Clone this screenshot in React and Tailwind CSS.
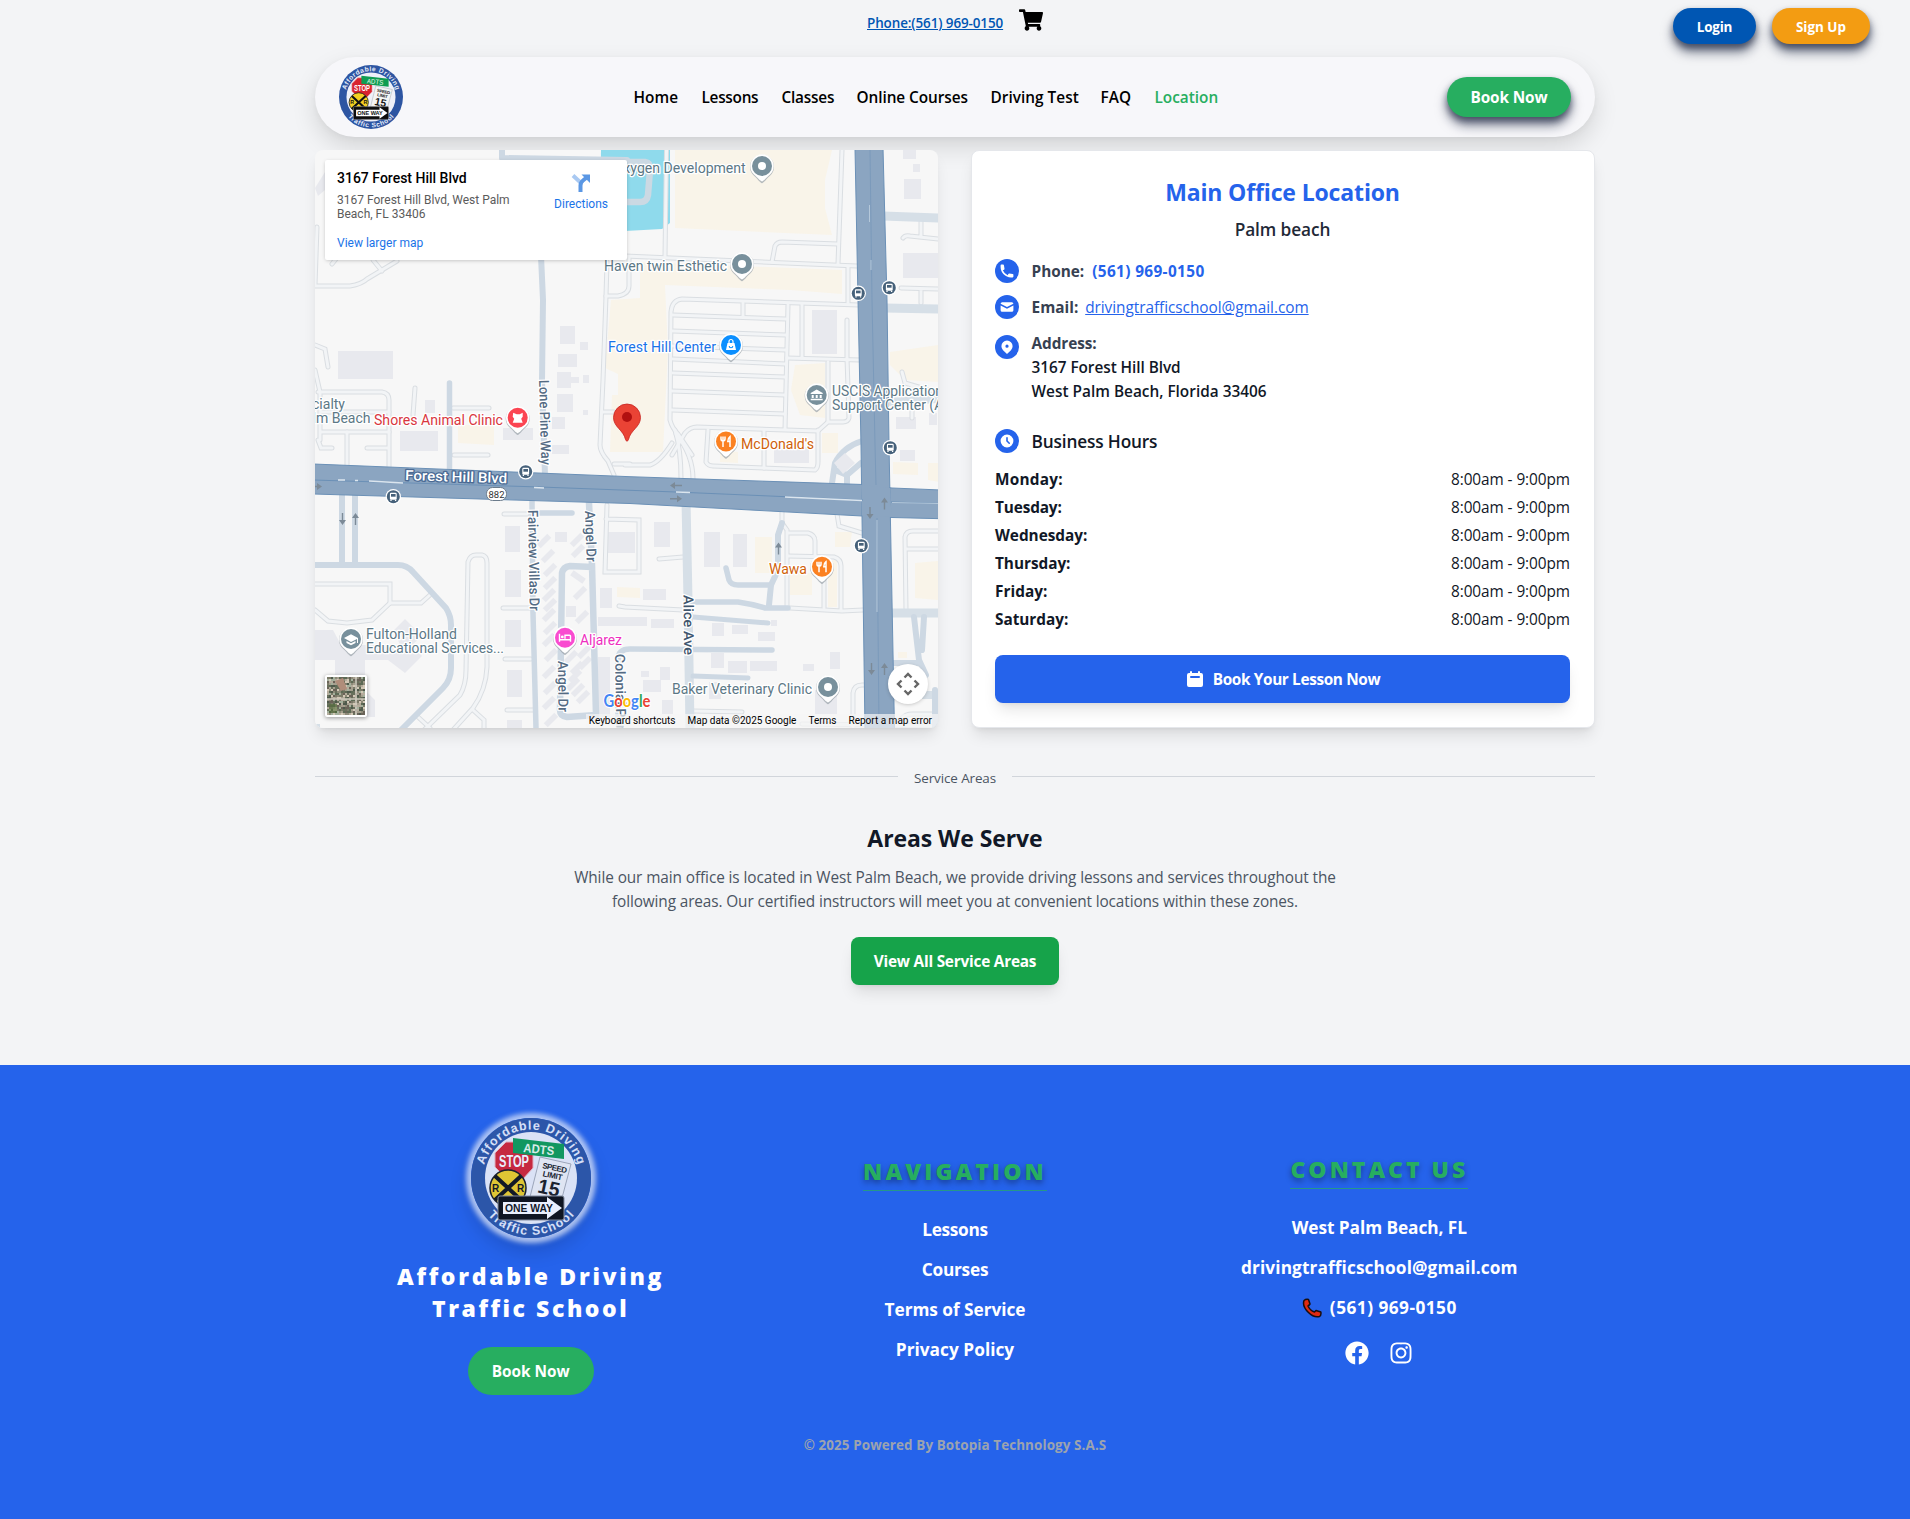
import { useId } from "react";
import { FaShoppingCart, FaFacebook, FaInstagram } from "react-icons/fa";

const BLD = [
  [338,351,55,28],[425,400,10,13],[400,431,38,20],[503,428,30,12],[560,326,15,18],[580,342,8,8],[558,354,19,13],[557,372,14,16],[571,377,8,6],
  [557,394,16,18],[583,410,5,5],[552,417,13,12],[583,375,6,8],[552,445,17,9],[505,526,15,26],[505,570,16,27],[505,620,16,27],[507,670,15,27],
  [507,720,15,8],[555,532,12,10],[606,532,29,21],[600,588,12,20],[598,617,49,9],[598,657,12,60],[654,522,16,25],[704,532,16,35],[733,534,14,33],
  [643,589,23,11],[651,619,23,9],[712,623,12,13],[732,625,16,9],[758,632,17,9],[771,620,6,6],[711,653,13,15],[728,661,19,12],[750,661,27,10],
  [803,664,11,7],[830,652,10,17],[660,667,10,13],[641,671,8,6],[643,680,18,12],[662,700,11,14],[815,690,22,24],[709,682,12,17],[774,447,35,16],
  [900,450,15,11],[903,150,13,9],[913,164,7,8],[904,179,17,20],[903,253,36,25],[812,310,25,44],[896,417,20,12],[929,413,8,12],[566,606,10,11],
];
const VILLAS = [
  [548,556],[550,570],[550,583],[549,595],[550,605],[549,615],[550,628],[549,640],[551,655],[549,672],[550,688],[549,703],[551,720],
  [577,540],[578,551],[580,593],[582,617],[584,652],[585,663],[577,668],[573,684],[578,690],[583,697],[571,657],[575,676],[544,541],
];
const BEIGE = [
  "675,150 832,150 825,180 825,208 832,235 675,228",
  "640,262 842,270 842,294 790,290 665,285 668,350 663,452 610,452 612,395 618,395 618,374 605,368 604,350 607,345 611,300 640,298",
  "890,365 890,352 938,345 938,382 905,380","795,365 825,363 825,418 800,415 791,390","822,433 838,433 838,453 822,453",
  "458,425 494,425 494,445 458,443","755,537 772,537 772,573 755,573","790,573 812,573 812,595 790,595","828,560 837,560 837,607 828,607",
  "835,532 852,532 850,547 835,547","915,563 939,561 939,600 915,598","893,462 918,463 918,475 893,474","898,652 907,652 907,658 898,658",
  "928,463 939,463 939,482 928,480","617,587 640,588 640,598 617,597","720,450 738,452 738,463 720,462",
];
const BLUE_ROADS = [
  ["M541 256L543 300L542 380L545 476",6],["M449.500 383V470",5.5],["M342 495V563M355 495V563",6],
  ["M315 565H398Q407 565 413 572L446 608Q451 616 451 625V668Q451 680 443 688L401 730",6],["M532 500L533 613L536 728",5.5],["M540 513H572",5.5],
  ["M589 503L592 565L596 715L567 717Q560 716 560 710L562 573Q563 567 570 566L592 567",6.5],["M618 728V660Q618 649 630 649L772 650",5.500],
  ["M693 617L768 623",5],["M693 602L738 602Q752 604 765 608L788 608",5.5],["M726 568L729 580Q731 585 738 585L771 585",5.5],
  ["M782 523L778 535V570L771 585L769 605",6],["M693 676L748 678",5],["M502 150V158L627 160",6],
  ["M832 483L835 463Q843 447 862 441M847 483V475L861 463M835 470L847 475",6],["M914 617L919 660L926 675M924 617L922 650M892 663H918",6],["M935 690V728",6],
];
const WIDE_ROADS = [["M686 500L688 600L690 728",9],["M883 216L939 218",9],["M885 308L939 309",9],["M890 613H939",9],["M887 402L939 399",8],["M920 695H939",8],["M315 728L320 728",8]];
const LANES = [
  "M666.5 150L665 256","M600 255L625 256L857 266","M842 150L838 264","M772 262L775 246Q777 242 782 242L838 244","M848 267V303",
  "M859 305L682 299Q672 300 671 312L670 420Q672 428 678 434L692 455","M673 315L786 319","M673 331L786 335","M673 346L786 350","M673 359L786 364","M673 373L785 377","M672 391L785 395","M672 410L785 414",
  "M743 303V317","M788 305L785 429","M802 304V358","M787 358L860 360","M828 362V421","M847 320V358L849 418Q848 422 843 422H828L818 431",
  "M672 455L685 433Q690 427 697 427L818 431","M708 430L706 462Q708 466 713 466L815 470Q818 468 818 462V430","M764 430V468","M675 430Q681 450 681 478",
  "M676 434Q693 455 693 479","M625 465H650Q660 462 672 443","M607 262L606 296L603 380L600 445Q600 452 608 461L614 475","M606 296H618Q629 294 629 286V258","M602 412H614",
  "M614 464H630","M317 227L315 285","M315 286H350Q362 284 367 279L397 261","M373 260L382 271","M332 264L339 255","M315 345L325 349L328 367","M315 370L320 392",
  "M318 392H382Q389 393 389 400V467","M415 388L413 415","M453 408H489","M320 392V440M320 412H389M320 432H389","M347 432V465","M454 455H488","M367 448H388","M318 440L321 448H332",
  "M315 584H390V603L372 620L347 623L328 621L315 610","M390 603L421 603L430 595","M424 730L460 695Q466 685 466 670L468 562Q470 555 476 555H482Q487 556 487 563V667Q486 690 473 708L453 730",
  "M473 710L484 720V728M418 717L430 728","M504 514H527","M503 608H530","M505 659H531","M507 710H534","M607 505L605 572H639V520L606 519","M659 559L683 557","M619 606L625 607L683 610",
  "M790 608L842 611L863 610","M782 510V523L787 530V607","M788 533H808Q815 535 815 541V556","M788 556L834 557Q841 559 841 566V610","M824 580V608","M837 514L839 526L862 533",
  "M906 610L905 537Q906 531 913 531H939M906 549H939","M903 238Q905 235 910 236L939 239M921 222V237","M901 288L939 289M921 289V303","M902 372L905 383L939 393M912 385V418","M853 728V693Q854 685 862 685H866",
  "M693 711L742 712","M802 724L939 726M902 718Q906 714 912 714H939",
];

function Mark({ x, y, c, children }) {
  return (
    <g transform={`translate(${x} ${y})`}>
      <path d="M0 16.500C-2 16-4 12.500-8 9A12 12 0 1 1 8 9C4 12.500 2 16 0 16.500Z" fill="#9aa3aa" opacity=".7" transform="translate(0 .8)" />
      <path d="M0 15.500C-2 15-4 12-8 8.600A11.700 11.700 0 1 1 8 8.600C4 12 2 15 0 15.500Z" fill="#fff" />
      <circle r="10" fill={c} />
      {children}
    </g>
  );
}
const Fork = () => <path d="M-5-5V-2.500Q-5-.5-3-.5V5.500M-1-5V-2.500Q-1-.5-3-.5M-3-5V-1M4 5.500V-5Q1.800-3.500 1.800 0H4" fill="none" stroke="#fff" strokeWidth="1.500" />;
function Bus({ x, y }) {
  return (
    <g transform={`translate(${x} ${y})`}>
      <circle r="7.700" fill="#fff" />
      <circle r="6.500" fill="#46617a" />
      <rect x="-3.400" y="-4" width="6.800" height="7" rx="1.200" fill="#fff" />
      <rect x="-2.300" y="-2.700" width="4.600" height="2.700" fill="#46617a" />
      <path d="M-2.300 3V4.300M2.300 3V4.300" stroke="#fff" strokeWidth="1.300" />
    </g>
  );
}
function Arrow({ x, y, r }) {
  return <path transform={`translate(${x} ${y}) rotate(${r})`} d="M-6-.7H1V-3.500L6 0L1 3.500V.7H-6Z" fill="#7c8a97" />;
}
function Label({ x, y, w, c = "#5c7886", r, end, bold, halo = "#fff", children }) {
  return (
    <text
      x={x} y={y} fill={c} stroke={halo} strokeWidth="2.600" strokeLinejoin="round" paintOrder="stroke" textLength={w}
      lengthAdjust="spacingAndGlyphs" textAnchor={end ? "end" : "start"} transform={r ? `rotate(${r} ${x} ${y})` : undefined}
      className={bold ? "text-[14px] font-medium" : "text-[14px]"}
    >
      {children}
    </text>
  );
}

function MapCanvas() {
  return (
    <svg viewBox="315 150 624 578" className="block h-[578px] w-[624px] max-w-none font-['Roboto',sans-serif]">
      <rect x="315" y="150" width="624" height="578" fill="#f7f7f7" />
      {BEIGE.map((p) => <polygon key={p} points={p} fill="#f9f4e9" />)}
      <polygon points="601,150 670,150 670,223 662,229 625,231 600,232" fill="#8fdaec" />
      <path d="M600 162H645Q651 163 650 170L648 195Q647 202 640 202H600" fill="none" stroke="#cbd9e3" strokeWidth="6.500" />
      <g fill="#e8e9ee">
        {BLD.map(([x, y, w, h]) => <rect key={`${x}-${y}`} x={x} y={y} width={w} height={h} />)}
        {VILLAS.map(([x, y]) => <rect key={`${x}-${y}`} x="-7.500" y="-2.800" width="15" height="5.600" transform={`translate(${x} ${y}) rotate(-45)`} />)}
        <rect x="-7.500" y="-3" width="15" height="6" transform="translate(578 577) rotate(35)" />
        <polygon points="315,188 325,172 325,190 318,196" />
        <polygon points="315,630 333,630 341,645 400,645 394,630 405,619 422,636 412,645 422,656 405,673 388,660 365,660 365,690 375,700 375,717 335,717 335,660 315,660" />
      </g>
      <g fill="none" stroke="#dadee2" strokeWidth="5" strokeLinecap="round">{LANES.map((d) => <path key={d} d={d} />)}</g>
      <g fill="none" stroke="#f2f4f6" strokeWidth="3" strokeLinecap="round">{LANES.map((d) => <path key={d} d={d} />)}</g>
      <g fill="none" stroke="#d6dfe7">{WIDE_ROADS.map(([d, w]) => <path key={d} d={d} strokeWidth={w} />)}</g>
      <g fill="none" stroke="#cdd8e3" strokeLinecap="round" strokeLinejoin="round">{BLUE_ROADS.map(([d, w]) => <path key={d} d={d} strokeWidth={w} />)}</g>
      <polygon points="845,453 855,463 843,474 834,463" fill="#e8e9ee" />
      <g fill="#8ba5c1" stroke="#6b90b6" strokeWidth="1">
        <polygon points="313,464 630,476.700 863,484.500 892,488 941,490 941,518.700 892,517.500 862,516 630,503.500 313,494" />
        <polygon points="855,148 883,148 887,300 889,445 894.500,730 865,730 861,445 858,300" />
      </g>
      <polygon points="861,485 890,488 891.500,517 862,515.500" fill="#8ba5c1" />
      <path d="M313 480L540 487L676 492L863 500M891 502L941 503.500" fill="none" stroke="#6b90b6" />
      <path d="M870 150L872 300L875 445L876 485M877 518L879 728" fill="none" stroke="#7b9abb" />
      <path d="M338 480H345M355 480.500H358M534 487.500L544 488M676 492L690 492.500M785 497L862 500.500M369 481L403 483" stroke="#dbe5ee" strokeWidth="1.400" />
      <path d="M869.500 205V222M871 260V270M877 520V612M892 502.500L939 503.500" stroke="#b5c8da" strokeWidth="1" />
      <Arrow x={676} y={485.500} r={180} /><Arrow x={676} y={498.700} r={0} /><Arrow x={870} y={513} r={90} /><Arrow x={884.500} y={503.500} r={-90} />
      <Arrow x={778.500} y={548.500} r={-90} /><Arrow x={871.500} y={669} r={90} /><Arrow x={884.500} y={669} r={-90} /><Arrow x={342.500} y={519} r={90} />
      <Arrow x={355.500} y={519} r={-90} /><Arrow x={316} y={486.500} r={0} />
      <Label x={745.700} y={173} w={132} end>Oxygen Development</Label>
      <Label x={604} y={271} w={123}>Haven twin Esthetic</Label>
      <Label x={608} y={352} w={108} c="#1a73e8">Forest Hill Center</Label>
      <Label x={374} y={425} w={129} c="#d9363e">Shores Animal Clinic</Label>
      <Label x={345} y={409} end>Specialty</Label>
      <Label x={370.500} y={423} end>Palm Beach</Label>
      <Label x={832} y={395.500} w={111}>USCIS Application</Label>
      <Label x={832} y={409.500}>Support Center (ASC)</Label>
      <Label x={741} y={449} w={73} c="#d05f0a">McDonald's</Label>
      <Label x={769} y={574} w={38} c="#d05f0a">Wawa</Label>
      <Label x={366} y={639} w={91}>Fulton-Holland</Label>
      <Label x={366} y={653} w={138}>Educational Services...</Label>
      <Label x={580} y={645} w={42} c="#ee2fc0">Aljarez</Label>
      <Label x={672} y={694} w={140}>Baker Veterinary Clinic</Label>
      <Label x={405} y={480} w={102} c="#fff" halo="#4a6a94" r={1.800} bold>Forest Hill Blvd</Label>
      <Label x={539} y={380} w={85} c="#546b83" r={88.500} bold>Lone Pine Way</Label>
      <Label x={528} y={510} w={101} c="#546b83" r={89} bold>Fairview Villas Dr</Label>
      <Label x={585} y={511} w={51} c="#546b83" r={88} bold>Angel Dr</Label>
      <Label x={558} y={661} w={51} c="#546b83" r={89.500} bold>Angel Dr</Label>
      <Label x={615} y={654} c="#546b83" r={89} bold>Colonial Park</Label>
      <Label x={683.500} y={595} w={60} c="#3f566e" r={89.500} bold>Alice Ave</Label>
      <rect x="486.500" y="487.500" width="20" height="13" rx="6" fill="#fff" stroke="#6b7b8b" />
      <text x="496.500" y="497.800" textAnchor="middle" fontSize="9.500" fill="#333">882</text>
      <Bus x={525.700} y={471.700} /><Bus x={393.300} y={496.700} /><Bus x={858.300} y={293.300} /><Bus x={889.300} y={287.700} /><Bus x={890.300} y={447.700} /><Bus x={861.300} y={545.700} />
      <Mark x={762} y={166} c="#78909c"><circle r="4" fill="#fff" /></Mark>
      <Mark x={742} y={264} c="#78909c"><circle r="4" fill="#fff" /></Mark>
      <Mark x={828} y={687} c="#78909c"><circle r="4" fill="#fff" /></Mark>
      <Mark x={731} y={345} c="#0b8fff">
        <path d="M-3.500-2H3.500L5 5H-5Z" fill="#fff" /><path d="M-2-1.500V-3.500A2 2 0 0 1 2-3.500V-1.500" fill="none" stroke="#fff" strokeWidth="1.200" /><path d="M-1.800 1A1.800 1.800 0 0 0 1.800 1" fill="none" stroke="#0b8fff" strokeWidth="1.100" />
      </Mark>
      <Mark x={816.700} y={395} c="#78909c"><path d="M-6-2L0-5.500L6-2V-1H-6ZM-5 0H-3V3H-5ZM-1 0H1V3H-1ZM3 0H5V3H3ZM-6 3.700H6V5.200H-6Z" fill="#fff" /></Mark>
      <Mark x={726} y={441.500} c="#fb8122"><Fork /></Mark>
      <Mark x={822} y={566.700} c="#fb8122"><Fork /></Mark>
      <Mark x={351} y={639} c="#78909c"><path d="M-7-1L0-4.800L7-1V4H6V0L0 3ZM-4.500 2L0 4.300L4.500 2V4L0 6.200L-4.500 4Z" fill="#fff" /></Mark>
      <Mark x={565} y={637.700} c="#f94bd0"><path d="M-5.500-4V4M-5.500 2H5.500M5.500 4V-1.500Q5.500-2.500 4.500-2.500H0V1" fill="none" stroke="#fff" strokeWidth="1.400" /><circle cx="-2.700" cy="-.8" r="1.400" fill="#fff" /></Mark>
      <Mark x={517.700} y={417.700} c="#fb4552"><path d="M-4.500-5L-1-3.500H2L5-5V-1L3.500 1L5 5H-5L-3.500 1L-5-1Z" fill="#fff" /></Mark>
      <path d="M627 441C626.200 441 625.700 440.400 625.500 439.500C623.500 430 613.500 427 613.500 417.500A13.500 13.500 0 0 1 640.500 417.500C640.500 427 630.500 430 628.500 439.500C628.300 440.400 627.800 441 627 441Z" fill="#ea4335" stroke="#c5221f" strokeWidth=".8" />
      <circle cx="627" cy="417" r="5" fill="#b11010" />
      <text x="603.500" y="707" textLength="47" lengthAdjust="spacingAndGlyphs" stroke="#fff" strokeWidth="2" paintOrder="stroke" className="font-['Lato'] text-[16.5px] font-bold">
        <tspan fill="#4285f4">G</tspan><tspan fill="#ea4335">o</tspan><tspan fill="#fbbc05">o</tspan><tspan fill="#4285f4">g</tspan><tspan fill="#34a853">l</tspan><tspan fill="#ea4335">e</tspan>
      </text>
    </svg>
  );
}

const AERIAL = ["#7b7a68","#a59f8e","#5d6a55","#b5ac9c","#69705c","#d2c8b6","#4f5a4c","#8d8a78","#a4b09c","#6a6358"];
function Aerial() {
  return (
    <svg viewBox="0 0 38 38" className="h-full w-full">
      <rect width="38" height="38" fill="#77745f" />
      {Array.from({ length: 361 }, (_, i) => (
        <rect key={i} x={(i % 19) * 2} y={Math.floor(i / 19) * 2} width="2" height="2" fill={AERIAL[(i * 7 + ((i * i) % 13) * 3 + Math.floor(i / 19) * 5) % 10]} />
      ))}
      <path d="M0 22H38M29 0V38" stroke="#cdc8bc" strokeWidth="1.600" />
      <path d="M8 4L16 1L20 12L14 14Z" fill="#b08d7a" /><path d="M2 27H10V36H2Z" fill="#55703a" opacity=".6" />
    </svg>
  );
}

function MapPanel() {
  return (
    <div className="relative h-[578px] overflow-hidden rounded-lg shadow-lg">
      <MapCanvas />
      <div className="absolute left-[10px] top-[10px] flex h-[100px] w-[302px] justify-between rounded-[2px] bg-white pl-3 pr-[19px] font-['Roboto',sans-serif] text-xs shadow-[0_1px_4px_-1px_rgba(0,0,0,0.3)]">
        <div className="pt-[9px]">
          <div className="text-[14px] font-medium leading-[18px] text-black">3167 Forest Hill Blvd</div>
          <div className="mt-[6px] leading-[14px] text-[#5b5b5b]">3167 Forest Hill Blvd, West Palm<br />Beach, FL 33406</div>
          <div className="mt-[15px] leading-[14px] text-[#1a73e8]">View larger map</div>
        </div>
        <div className="flex flex-col items-center pt-[13px] text-[#1a73e8]">
          <svg viewBox="0 0 20 20" className="size-5">
            <path d="M2 2.500L9.500 9.500" stroke="#a9c9f2" strokeWidth="4" /><path d="M9.500 19V12.500Q9.500 9.500 12 7.500L15 5" fill="none" stroke="#5a97e4" strokeWidth="4" /><path d="M10.500 1.500H19V10Z" fill="#5a97e4" />
          </svg>
          <div className="mt-1 leading-[14px]">Directions</div>
        </div>
      </div>
      <div className="absolute bottom-[11px] left-[10px] size-[42px] rounded-[2px] bg-white p-[2px] shadow-[0_1px_4px_rgba(0,0,0,0.4)]"><Aerial /></div>
      <div className="absolute bottom-6 right-[10px] flex size-10 items-center justify-center rounded-full bg-white shadow-[0_1px_4px_-1px_rgba(0,0,0,0.3)]">
        <svg viewBox="-12 -12 24 24" className="size-6" fill="none" stroke="#666" strokeWidth="2.400">
          <path d="M-3.500-6.500L0-10L3.500-6.500M-3.500 6.500L0 10L3.500 6.500M-6.500-3.500L-10 0L-6.500 3.500M6.500-3.500L10 0L6.500 3.500" />
        </svg>
      </div>
      <div className="absolute bottom-0 right-0 flex h-[14px] gap-3 bg-[#f5f5f5]/70 pl-[3px] pr-[6px] font-['Roboto',sans-serif] text-[10px] leading-[14px] text-black">
        <span>Keyboard shortcuts</span><span>Map data ©2025 Google</span><span>Terms</span><span>Report a map error</span>
      </div>
    </div>
  );
}

function Logo() {
  const id = useId().replace(/[^a-zA-Z0-9]/g, "");
  return (
    <svg viewBox="-60 -60 120 120" className="h-full w-full">
      <defs>
        <path id={`${id}t`} d="M-48.500 0A48.500 48.500 0 0 1 48.500 0" />
        <path id={`${id}b`} d="M-57 0A57 57 0 0 0 57 0" />
      </defs>
      <circle r="60" fill="#2d55a2" />
      <circle r="46" fill="#eef0f8" />
      <g fill="#e8edfa" className="font-['Liberation_Sans'] text-[12.5px] font-bold">
        <text textLength="126"><textPath href={`#${id}t`} startOffset="50%" textAnchor="middle">Affordable Driving</textPath></text>
        <text textLength="98"><textPath href={`#${id}b`} startOffset="50%" textAnchor="middle">Traffic School</textPath></text>
      </g>
      <polygon points="-25,-36 -9,-36 2,-26 2,-10 -9,2 -25,0 -36,-11 -36,-25" fill="#d8232e" stroke="#f3b8bb" strokeWidth="1" />
      <text x="-32" y="-11" textLength="30" lengthAdjust="spacingAndGlyphs" fill="#fff" className="font-['Liberation_Sans'] text-[16px] font-bold">STOP</text>
      <polygon points="9,-21 40,-14 31,20 -1,19" fill="#f4f4f4" stroke="#a9adb5" strokeWidth="1" />
      <g transform="rotate(12 20 0)" fill="#1b1b1b" className="font-['Liberation_Sans'] font-bold">
        <text x="9" y="-8" textLength="25" fontSize="8">SPEED</text>
        <text x="11" y="0" textLength="20" fontSize="8">LIMIT</text>
        <text x="9" y="17" textLength="22" lengthAdjust="spacingAndGlyphs" fontSize="20">15</text>
      </g>
      <polygon points="-18,-40 33,-34 33,-19 -18,-25" fill="#0f9d52" />
      <text x="-8" y="-26" transform="rotate(6 -8 -26)" textLength="31" lengthAdjust="spacingAndGlyphs" fill="#e9fbe9" className="font-['Liberation_Sans'] text-[12.5px]">ADTS</text>
      <circle cx="-23" cy="10" r="18" fill="#f3d021" stroke="#1a1a1a" strokeWidth="1.500" />
      <path d="M-36-2L-10 22M-10-2L-36 22" stroke="#111" strokeWidth="4" />
      <g fill="#111" className="font-['Liberation_Sans'] text-[10px] font-bold"><text x="-39" y="14">R</text><text x="-14" y="14">R</text></g>
      <rect x="-33" y="18" width="66" height="24" rx="2" fill="#0d0d0d" stroke="#8b8f96" strokeWidth="1" />
      <polygon points="-28,24 16,24 16,19 31,30 16,41 16,36 -28,36" fill="#fff" />
      <text x="-26" y="34" textLength="48" lengthAdjust="spacingAndGlyphs" fill="#111" className="font-['Liberation_Sans'] text-[10px] font-bold">ONE WAY</text>
    </svg>
  );
}

function Badge({ className = "", children }) {
  return (
    <span className={`flex size-6 shrink-0 items-center justify-center rounded-full bg-[#2563eb] text-white ${className}`}>
      <svg viewBox="0 0 20 20" fill="currentColor" fillRule="evenodd" clipRule="evenodd" className="size-4">{children}</svg>
    </span>
  );
}

const NAV = [
  ["Home","w-[44px] tracking-[0.05px]"],["Lessons","w-[56px] tracking-[-0.28px]"],["Classes","w-[51px] tracking-[-0.22px]"],["Online Courses","w-[110px] tracking-[-0.07px]"],
  ["Driving Test","w-[86px] tracking-[0.02px]"],["FAQ","w-[30px] tracking-[0.05px]"],["Location","w-[62px] tracking-[0px] text-[#27ae60]"],
];
const DAYS = [
  ["Monday:","tracking-[0.22px]"],["Tuesday:","tracking-[-0.14px]"],["Wednesday:","tracking-[-0.02px]"],
  ["Thursday:","tracking-[-0.04px]"],["Friday:","tracking-[0.03px]"],["Saturday:","tracking-[-0.04px]"],
];
const LINKS = [["Lessons","tracking-[-0.35px]"],["Courses","tracking-[-0.22px]"],["Terms of Service","tracking-[-0.05px]"],["Privacy Policy","tracking-[0.02px]"]];

export default function App() {
  return (
    <div className="h-[1519px] bg-[#f3f4f6] font-['Open_Sans','Noto_Sans',sans-serif] text-[15.36px] leading-6 text-[#111827]">
      <div className="grid h-[57px] grid-cols-[1fr_auto_1fr] pt-2">
        <div />
        <div className="flex items-start gap-4">
          <a className="mt-[5px] w-[136px] whitespace-nowrap text-[13.44px] font-[560] leading-5 tracking-[-0.1px] text-[#0056b3] underline">Phone:(561) 969-0150</a>
          <FaShoppingCart className="size-6 text-black" />
        </div>
        <div className="flex items-start justify-end gap-4 pr-10 text-[13.44px] font-[670] leading-5 text-white">
          <button className="h-9 w-[83px] rounded-full bg-[#0056b3] pt-px tracking-[-0.2px] shadow-[0_8px_12px_rgba(10,20,50,0.55),0_4px_6px_rgba(10,20,50,0.45)]">Login</button>
          <button className="h-9 w-[98px] rounded-full bg-[#f39c12] pt-px shadow-[0_8px_12px_rgba(10,20,50,0.55),0_4px_6px_rgba(10,20,50,0.45)]">Sign Up</button>
        </div>
      </div>

      <header className="mx-auto flex h-20 w-[1280px] items-center justify-between rounded-full bg-[#f7f7fa] px-6 shadow-[0_10px_25px_rgba(0,0,0,0.13),0_2px_6px_rgba(0,0,0,0.04)]">
        <div className="size-16"><Logo /></div>
        <nav className="flex gap-6 whitespace-nowrap pt-0.5 font-[560] text-black">
          {NAV.map(([t, c]) => <a key={t} className={c}>{t}</a>)}
        </nav>
        <button className="h-10 w-[124px] rounded-full bg-[#27ae60] pt-0.5 font-[670] tracking-[-0.14px] text-white shadow-[0_8px_12px_rgba(10,20,50,0.55),0_4px_6px_rgba(10,20,50,0.45)]">Book Now</button>
      </header>

      <main className="mx-auto w-[1280px]">
        <div className="mt-[13px] grid grid-cols-[623px_624px] gap-[33px]">
          <MapPanel />
          <section className="h-[578px] rounded-lg border border-[#e5e7eb] bg-white p-6 pl-[23px] pt-[25px] shadow-lg">
            <h2 className="text-center text-[23px] font-bold leading-8 tracking-[-0.14px] text-[#2563eb]">Main Office Location</h2>
            <p className="mt-2 text-center text-[17.28px] font-[560] leading-7 tracking-[-0.1px] text-[#1f2937]">Palm beach</p>
            <div className="mt-[15px] flex items-center gap-[12.6px]">
              <Badge><path d="M2 3a1 1 0 0 1 1-1h2.150a1 1 0 0 1 .99.84l.74 4.430a1 1 0 0 1-.54 1.060l-1.550.77a11 11 0 0 0 6.100 6.100l.78-1.550a1 1 0 0 1 1.060-.54l4.430.74a1 1 0 0 1 .84.99V17a1 1 0 0 1-1 1h-2C7.820 18 2 12.180 2 5V3z" /></Badge>
              <span className="w-[52px] translate-y-px whitespace-nowrap font-[670] tracking-[-0.05px] text-[#374151]">Phone:</span>
              <a className="-ml-1 translate-y-px font-[670] tracking-[0.37px] text-[#2563eb]">(561) 969-0150</a>
            </div>
            <div className="mt-3 flex items-center gap-[12.6px]">
              <Badge><path d="M2 5.880 10 9.880l8-4A2 2 0 0 0 16 4H4a2 2 0 0 0-2 1.880zM18 8.120l-8 4-8-4V14a2 2 0 0 0 2 2h12a2 2 0 0 0 2-2V8.120z" /></Badge>
              <span className="w-[45px] translate-y-px whitespace-nowrap font-[670] tracking-[0px] text-[#374151]">Email:</span>
              <a className="-ml-1 translate-y-px tracking-[-0.04px] text-[#2563eb] underline">drivingtrafficschool@gmail.com</a>
            </div>
            <div className="mt-3 flex items-start gap-[12.6px]">
              <Badge className="mt-1"><path d="M5.050 4.050a7 7 0 1 1 9.900 9.900L10 18.900l-4.950-4.950a7 7 0 0 1 0-9.900zM10 11a2 2 0 1 0 0-4 2 2 0 0 0 0 4z" /></Badge>
              <div className="translate-y-px font-[560]">
                <div className="font-[670] tracking-[-0.1px] text-[#374151]">Address:</div>
                <div className="tracking-[-0.06px]">3167 Forest Hill Blvd</div>
                <div className="tracking-[0.01px]">West Palm Beach, Florida 33406</div>
              </div>
            </div>
            <div className="mt-6 flex items-center gap-[12.6px]">
              <Badge><path d="M10 18a8 8 0 1 0 0-16 8 8 0 0 0 0 16zm1-12a1 1 0 1 0-2 0v4c0 .27.1.52.29.7l2.830 2.830a1 1 0 0 0 1.410-1.410L11 9.590V6z" /></Badge>
              <span className="translate-y-px text-[17.28px] font-[560] leading-7 tracking-[-0.17px]">Business Hours</span>
            </div>
            <div className="mt-[13px] flex flex-col gap-1">
              {DAYS.map(([d, c]) => (
                <div key={d} className="flex justify-between"><span className={`font-[670] ${c}`}>{d}</span><span className="tracking-[-0.07px]">8:00am - 9:00pm</span></div>
              ))}
            </div>
            <button className="mt-[23px] flex h-12 w-full items-center justify-center gap-2 rounded-lg bg-[#2563eb] font-[670] tracking-[-0.36px] text-white shadow-lg">
              <svg viewBox="0 0 20 20" fill="currentColor" fillRule="evenodd" className="size-5"><path d="M6 2a1 1 0 0 0-1 1v1H4a2 2 0 0 0-2 2v10a2 2 0 0 0 2 2h12a2 2 0 0 0 2-2V6a2 2 0 0 0-2-2h-1V3a1 1 0 1 0-2 0v1H7V3a1 1 0 0 0-1-1zm0 5a1 1 0 0 0 0 2h8a1 1 0 1 0 0-2H6z" /></svg>
              <span className="translate-y-px">Book Your Lesson Now</span>
            </button>
          </section>
        </div>

        <div className="mt-10 flex h-5 items-start gap-4">
          <div className="mt-2 h-px flex-1 bg-[#d1d5db]" />
          <span className="text-[13.44px] leading-5 tracking-[-0.1px] text-[#4b5563]">Service Areas</span>
          <div className="mt-2 h-px flex-1 bg-[#d1d5db]" />
        </div>
        <section className="mt-[34px] flex flex-col items-center text-center">
          <h2 className="text-[23px] font-bold leading-8 tracking-[-0.08px]">Areas We Serve</h2>
          <p className="mt-3 whitespace-nowrap tracking-[-0.09px] text-[#4b5563]">
            While our main office is located in West Palm Beach, we provide driving lessons and services throughout the<br />
            <span className="tracking-[-0.115px]">following areas. Our certified instructors will meet you at convenient locations within these zones.</span>
          </p>
          <button className="mt-[23px] h-12 w-[208px] rounded-lg bg-[#16a34a] pt-0.5 font-[670] tracking-[-0.22px] text-white shadow-lg">View All Service Areas</button>
        </section>
      </main>

      <footer className="mt-20 h-[454px] bg-[#2563eb] font-[670] text-white">
        <div className="mx-auto grid h-[370px] w-[1273px] grid-cols-3">
          <div className="flex flex-col items-center pt-[53px]">
            <div className="size-[120px] rounded-full opacity-90 shadow-[0_0_5px_5px_rgba(255,255,255,0.7),0_10px_18px_4px_rgba(0,0,0,0.15)]"><Logo /></div>
            <h3 className="mt-[22px] text-center text-[23px] font-black leading-8 tracking-[2.690px]">Affordable Driving<br /><span className="tracking-[2.560px]">Traffic School</span></h3>
            <button className="mt-[23px] h-12 w-[126px] rounded-full bg-[#27ae60] pt-0.5 font-bold">Book Now</button>
          </div>
          <div className="flex flex-col items-center pt-[90px] text-[17.28px] leading-7">
            <h3 className="mb-6 border-b border-[#27ae60]/70 pb-[3px] text-[23px] font-black leading-8 tracking-[3.110px] text-[#27ae60] [text-shadow:0_3px_6px_rgba(0,0,0,0.4)]">NAVIGATION</h3>
            <div className="flex flex-col items-center gap-3 pt-px">{LINKS.map(([t, c]) => <a key={t} className={c}>{t}</a>)}</div>
          </div>
          <div className="flex flex-col items-center pt-[88px] text-[17.28px] leading-7">
            <h3 className="mb-6 border-b border-[#27ae60]/70 pb-[3px] text-[23px] font-black leading-8 tracking-[2.990px] text-[#27ae60] [text-shadow:0_3px_6px_rgba(0,0,0,0.4)]">CONTACT US</h3>
            <div className="flex flex-col items-center gap-3 pt-px">
              <span className="tracking-[-0.07px]">West Palm Beach, FL</span>
              <span className="tracking-[0.1px]">drivingtrafficschool@gmail.com</span>
              <span className="flex items-center gap-2 tracking-[0.46px]">
                <svg viewBox="0 0 20 20" className="size-5"><path d="M2 2.500Q4 .8 6.500 1.500L8 6Q7 7.500 6 8Q8 12.500 12.500 14L14 12.500L18.800 14Q19.500 17 17.500 18.500Q12 20 6.500 14.500Q0 8 2 2.500Z" fill="#e02a10" stroke="#1a0d0d" strokeWidth="1.500" strokeLinejoin="round" /></svg>
                (561) 969-0150
              </span>
            </div>
            <div className="mt-[19px] flex gap-5"><FaFacebook className="size-6" /><FaInstagram className="size-6" /></div>
          </div>
        </div>
        <p className="text-center text-[13.44px] leading-5 tracking-[0.1px] text-[#9ca3af]">© 2025 Powered By Botopia Technology S.A.S</p>
      </footer>
    </div>
  );
}
